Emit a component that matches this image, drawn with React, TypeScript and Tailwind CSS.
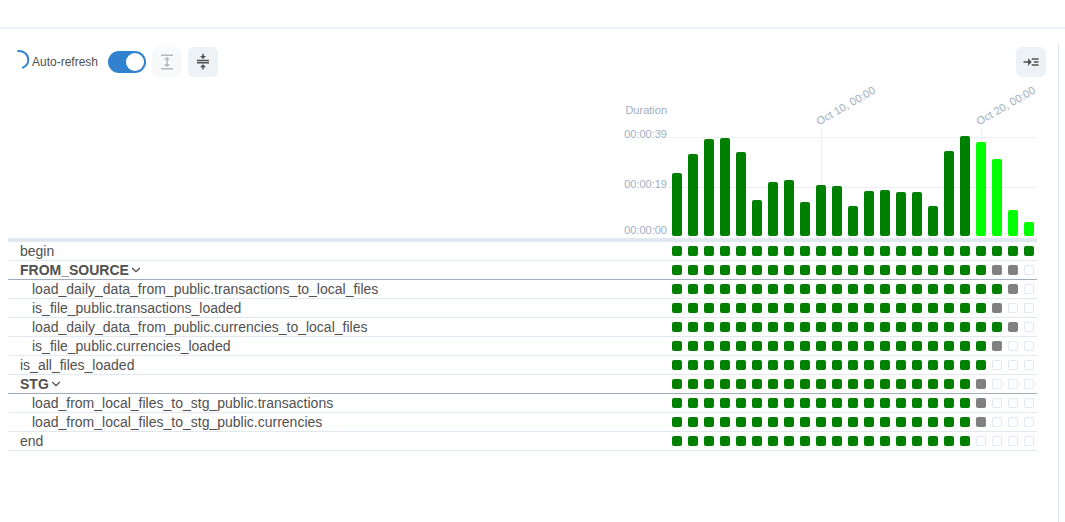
import { useState } from 'react';
import { MdCompress, MdExpand, MdReadMore } from 'react-icons/md';
import { FiChevronDown } from 'react-icons/fi';

type Run = { height: number; running?: boolean; label?: string };
type Task = { name: string; group?: boolean; child?: boolean; success: number; grey: number };

const runs: Run[] = [
  { height: 63 }, { height: 82 }, { height: 97 }, { height: 98 }, { height: 84 },
  { height: 36 }, { height: 54 }, { height: 56 }, { height: 34 },
  { height: 51, label: 'Oct 10, 00:00' },
  { height: 50 }, { height: 30 }, { height: 45 }, { height: 46 }, { height: 44 },
  { height: 44 }, { height: 30 }, { height: 85 }, { height: 100 },
  { height: 94, running: true, label: 'Oct 20, 00:00' },
  { height: 77, running: true }, { height: 26, running: true }, { height: 14, running: true },
];

const tasks: Task[] = [
  { name: 'begin', success: 23, grey: 0 },
  { name: 'FROM_SOURCE', group: true, success: 20, grey: 2 },
  { name: 'load_daily_data_from_public.transactions_to_local_files', child: true, success: 21, grey: 1 },
  { name: 'is_file_public.transactions_loaded', child: true, success: 20, grey: 1 },
  { name: 'load_daily_data_from_public.currencies_to_local_files', child: true, success: 21, grey: 1 },
  { name: 'is_file_public.currencies_loaded', child: true, success: 20, grey: 1 },
  { name: 'is_all_files_loaded', success: 20, grey: 0 },
  { name: 'STG', group: true, success: 19, grey: 1 },
  { name: 'load_from_local_files_to_stg_public.transactions', child: true, success: 19, grey: 1 },
  { name: 'load_from_local_files_to_stg_public.currencies', child: true, success: 19, grey: 1 },
  { name: 'end', success: 19, grey: 0 },
];

function Toolbar() {
  const [auto, setAuto] = useState(true);
  return (
    <div className="flex h-[30px] items-center">
      <svg className="-mt-1 mr-0.5 ml-0.5 size-5" viewBox="0 0 20 20" fill="none" aria-hidden="true">
        <path d="M7.4 1.2C13 .4 18.3 4 18.3 9.8C18.3 13.6 16.3 16.4 12.2 18" stroke="#3182ce" strokeWidth="1.9" />
      </svg>
      <label className="flex items-center gap-2.5 text-xs">
        Auto-refresh
        <span className="relative flex">
          <input
            type="checkbox"
            role="switch"
            checked={auto}
            onChange={(e) => setAuto(e.target.checked)}
            className="peer h-[22px] w-[38px] appearance-none rounded-full bg-[#cbd5e0] checked:bg-[#3182ce]"
          />
          <span className="pointer-events-none absolute top-0.5 left-0.5 size-[18px] rounded-full bg-white peer-checked:left-[18px]" />
        </span>
      </label>
      <button type="button" disabled aria-label="Expand all task groups" className="ml-1.5 flex size-[30px] items-center justify-center rounded-md bg-[#edf2f7] opacity-40">
        <MdExpand size={18} />
      </button>
      <button type="button" aria-label="Collapse all task groups" className="ml-1.5 flex size-[30px] items-center justify-center rounded-md bg-[#edf2f7]">
        <MdCompress size={18} />
      </button>
      <button type="button" aria-label="Toggle details panel" className="mr-3 ml-auto flex size-[30px] items-center justify-center rounded-md bg-[#edf2f7]">
        <MdReadMore size={18} />
      </button>
    </div>
  );
}

function DurationAxis() {
  return (
    <div className="flex flex-col items-end justify-end pr-0.5 text-[11px] leading-4 font-normal text-[#a0aec0]">
      <span>Duration</span>
      <span className="mt-2">00:00:39</span>
      <span className="mt-[34px]">00:00:19</span>
      <span className="mt-[30px]">00:00:00</span>
    </div>
  );
}

function DurationChart() {
  return (
    <div className="relative flex h-[161px] items-end pb-0.5">
      <div className="absolute inset-x-0 bottom-[100px] h-px bg-[#edeff2]" />
      <div className="absolute inset-x-0 bottom-[50px] h-px bg-[#edeff2]" />
      <div className="absolute inset-x-0 bottom-1 h-px bg-[#edeff2]" />
      {runs.map((run, i) => (
        <div key={i} className="relative flex w-4 items-end justify-center self-stretch">
          {run.label && (
            <>
              <span className="absolute bottom-0 left-2 h-[108px] w-px bg-[#edeff2]" />
              <span className="absolute bottom-[107px] left-2 origin-bottom-left -rotate-30 text-[11px] leading-4 font-normal whitespace-nowrap text-[#a0aec0]">
                {run.label}
              </span>
            </>
          )}
          <button
            type="button"
            aria-label={`Run ${i + 1}`}
            style={{ height: run.height }}
            className={`relative w-2.5 rounded-xs ${run.running ? 'bg-[#00ff00]' : 'bg-[#008000]'}`}
          />
        </div>
      ))}
    </div>
  );
}

function TaskRow({ task }: { task: Task }) {
  const line = task.group ? 'border-b border-[#a0aec0]' : 'border-b border-[#e2e8f0]';
  return (
    <tr>
      <th
        scope="row"
        className={`h-[19px] py-0 pr-0 text-left text-sm leading-[18px] whitespace-nowrap ${line} ${task.group ? 'font-bold' : 'font-normal'} ${task.child ? 'pl-6' : 'pl-3'}`}
      >
        {task.group ? (
          <button type="button" aria-expanded="true" className="flex items-center">
            {task.name}
            <FiChevronDown size={14} />
          </button>
        ) : (
          task.name
        )}
      </th>
      {runs.map((_, i) => (
        <td key={i} className={`w-4 p-0 ${line}`}>
          <div
            className={`mx-auto size-2.5 rounded-xs ${
              i < task.success ? 'bg-[#008000]' : i < task.success + task.grey ? 'bg-[#808080]' : 'border border-[#e2e8f0]'
            }`}
          />
        </td>
      ))}
    </tr>
  );
}

export default function App() {
  return (
    <div className="flex min-h-screen flex-col bg-white font-['Liberation_Sans',Arial,sans-serif] text-[#51504f]">
      <header className="h-[29px] border-b-2 border-[#edf2f7]" />
      <div className="flex grow pt-[15px]">
        <main className="min-w-0 grow pt-[3px] pl-2">
          <Toolbar />
          <div className="pr-[21px]">
            <table className="w-full border-separate border-spacing-0">
              <thead>
                <tr>
                  <th className="p-0 align-bottom">
                    <DurationAxis />
                  </th>
                  <th colSpan={runs.length} className="w-[368px] p-0">
                    <DurationChart />
                  </th>
                </tr>
                <tr>
                  <td colSpan={runs.length + 1} className="h-1 bg-[#e2e8f0] p-0" />
                </tr>
              </thead>
              <tbody>
                {tasks.map((task) => (
                  <TaskRow key={task.name} task={task} />
                ))}
              </tbody>
            </table>
          </div>
        </main>
        <aside aria-label="Details" className="w-[7px] shrink-0 border-l border-[#e2e8f0]" />
      </div>
    </div>
  );
}
